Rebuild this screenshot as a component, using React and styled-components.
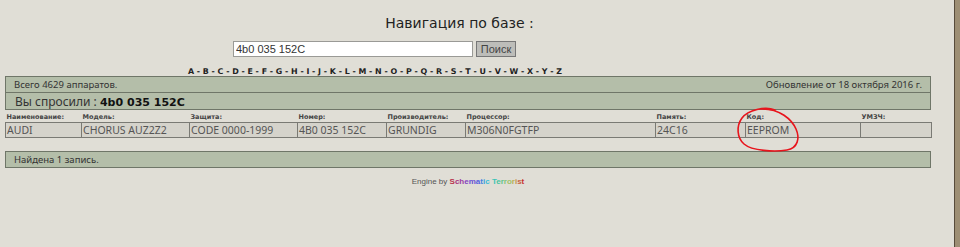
import React from "react";
import styled, { createGlobalStyle } from "styled-components";

const Global = createGlobalStyle`
  html, body { margin: 0; padding: 0; background: #e0ded6; }
  body { font-family: "Noto Sans", "DejaVu Sans", sans-serif; }
`;

const Frame = styled.div`
  position: relative;
  width: 960px;
  height: 247px;
  box-sizing: border-box;
  border-right: 5px solid #9d8e74;
  overflow: hidden;
`;

const Inner = styled.div`
  height: 100%;
  box-sizing: border-box;
  border-right: 1px solid #574b3b;
  padding: 15px 0 0 5px;
`;

const Title = styled.h1`
  margin: 0;
  width: 909px;
  text-align: center;
  font-family: "DejaVu Sans", sans-serif;
  font-weight: normal;
  font-size: 14px;
  line-height: 17px;
  color: #222;
`;

const SearchRow = styled.form`
  display: flex;
  gap: 3px;
  margin: 9px 0 0 228px;
`;

const SearchInput = styled.input`
  width: 240px;
  height: 16px;
  box-sizing: border-box;
  border: 1px solid #9a9a96;
  background: #fff;
  padding: 0 2px;
  font-family: "Liberation Sans", Arial, sans-serif;
  font-size: 11px;
  color: #333;
  outline: none;
`;

const SearchButton = styled.button`
  width: 40px;
  height: 16px;
  box-sizing: border-box;
  border: 1px solid #777;
  background: #bdbdb9;
  padding: 0;
  font-family: "Liberation Sans", Arial, sans-serif;
  font-size: 11px;
  color: #444;
`;

const Letters = styled.div`
  width: 740px;
  text-align: center;
  margin-top: 10px;
  font-family: "DejaVu Sans", sans-serif;
  font-weight: bold;
  font-size: 7.9px;
  line-height: 9px;
  color: #222;
`;

const Panel = styled.div`
  width: 926px;
  box-sizing: border-box;
  border: 1px solid #6f7668;
  background: #b4bea9;
`;

const PanelRow = styled.div`
  display: flex;
  justify-content: space-between;
  align-items: center;
  height: ${(p) => p.$h}px;
  padding: 0 8px 0 8px;
  border-top: ${(p) => (p.$divided ? "1px solid #6f7668" : "none")};
`;

const SmallNote = styled.span`
  font-family: "Noto Sans", sans-serif;
  font-size: 9.5px;
  color: #333;
`;

const Asked = styled.span`
  font-family: "Noto Sans", sans-serif;
  font-size: 12px;
  color: #333;
  padding-left: 1px;
`;

const AskedValue = styled.b`
  font-family: "DejaVu Sans", sans-serif;
  font-size: 11px;
  color: #111;
`;

const Table = styled.table`
  width: 926px;
  table-layout: fixed;
  border-collapse: collapse;
  margin-top: 1px;
`;

const LabelCell = styled.th`
  text-align: left;
  font-family: "DejaVu Sans", sans-serif;
  font-weight: bold;
  font-size: 6.5px;
  color: #444;
  padding: 0 0 0 1px;
  height: 11px;
  vertical-align: middle;
`;

const Cell = styled.td`
  height: 14px;
  border: 1px solid #7a7a74;
  background: #d5d3cb;
  padding: 0 1px;
  font-family: "Noto Sans", sans-serif;
  font-size: 10.5px;
  line-height: 13px;
  color: #555;
  white-space: nowrap;
  overflow: hidden;
`;

const Footer = styled(Panel)`
  margin-top: 13px;
`;

const Credits = styled.div`
  width: 926px;
  text-align: center;
  margin-top: 9px;
  font-family: "Liberation Sans", Arial, sans-serif;
  font-size: 8px;
  color: #555;
`;

const Brand = styled.b`
  letter-spacing: 0;
`;

const Annotation = styled.svg`
  position: absolute;
  left: 730px;
  top: 104px;
  width: 80px;
  height: 52px;
  pointer-events: none;
`;

const columns = [
  { label: "Наименование:", value: "AUDI", w: 76 },
  { label: "Модель:", value: "CHORUS AUZ2Z2", w: 108 },
  { label: "Защита:", value: "CODE 0000-1999", w: 108 },
  { label: "Номер:", value: "4B0 035 152C", w: 89 },
  { label: "Производитель:", value: "GRUNDIG", w: 79 },
  { label: "Процессор:", value: "M306N0FGTFP", w: 190 },
  { label: "Память:", value: "24C16", w: 90 },
  { label: "Код:", value: "EEPROM", w: 115 },
  { label: "УМЗЧ:", value: "", w: 71 },
];

const letters = "ABCDEFGHIJKLMNOPQRSTUVWXYZ".split("");

const brandColors = [
  "#b8304c", "#a8347e", "#9a3ca4", "#8444c0", "#6a50d4", "#5462e0", "#4480e0", "#3ca0e0", "#3cbcd8",
  null,
  "#3cc4b8", "#48c4a0", "#60c48c", "#80c47c", "#a0c068", "#b8b058", "#c89048", "#c86040", "#c83030",
];

export default function App() {
  const brand = "Schematic Terrorist".split("");
  return (
    <>
      <Global />
      <Frame>
        <Inner>
          <Title>Навигация по базе :</Title>
          <SearchRow onSubmit={(e) => e.preventDefault()}>
            <SearchInput defaultValue="4b0 035 152C" />
            <SearchButton type="submit">Поиск</SearchButton>
          </SearchRow>
          <Letters>{letters.join(" - ")}</Letters>
          <Panel>
            <PanelRow $h={15}>
              <SmallNote>Всего 4629 аппаратов.</SmallNote>
              <SmallNote>Обновление от 18 октября 2016 г.</SmallNote>
            </PanelRow>
            <PanelRow $h={16} $divided>
              <Asked>
                Вы спросили : <AskedValue>4b0 035 152C</AskedValue>
              </Asked>
            </PanelRow>
          </Panel>
          <Table>
            <colgroup>
              {columns.map((c) => (
                <col key={c.label} style={{ width: c.w }} />
              ))}
            </colgroup>
            <thead>
              <tr>
                {columns.map((c) => (
                  <LabelCell key={c.label}>{c.label}</LabelCell>
                ))}
              </tr>
            </thead>
            <tbody>
              <tr>
                {columns.map((c) => (
                  <Cell key={c.label}>{c.value}</Cell>
                ))}
              </tr>
            </tbody>
          </Table>
          <Footer>
            <PanelRow $h={15}>
              <SmallNote>Найдена 1 запись.</SmallNote>
            </PanelRow>
          </Footer>
          <Credits>
            Engine by{" "}
            <Brand>
              {brand.map((ch, i) => (
                <span key={i} style={{ color: brandColors[i] || "inherit" }}>
                  {ch}
                </span>
              ))}
            </Brand>
          </Credits>
        </Inner>
        <Annotation viewBox="0 0 80 52">
          <path
            d="M45 6 C35 2, 18 6, 12 14 C6 22, 7 34, 14 40 C22 47, 45 48, 57 46 C68 44, 70 34, 66 25 C62 16, 50 4, 30 5"
            fill="none"
            stroke="#e8141c"
            strokeWidth="1.6"
            strokeLinecap="round"
          />
        </Annotation>
      </Frame>
    </>
  );
}
